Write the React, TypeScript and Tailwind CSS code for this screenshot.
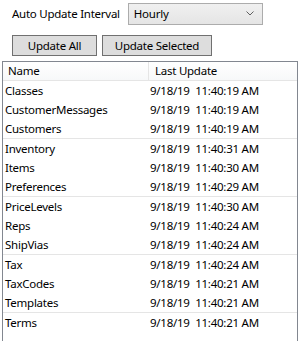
import React from 'react';

interface TableRow {
  name: string;
  updated: string;
}

const rows: TableRow[] = [
  { name: 'Classes', updated: '9/18/19  11:40:19 AM' },
  { name: 'CustomerMessages', updated: '9/18/19  11:40:19 AM' },
  { name: 'Customers', updated: '9/18/19  11:40:19 AM' },
  { name: 'Inventory', updated: '9/18/19  11:40:31 AM' },
  { name: 'Items', updated: '9/18/19  11:40:30 AM' },
  { name: 'Preferences', updated: '9/18/19  11:40:29 AM' },
  { name: 'PriceLevels', updated: '9/18/19  11:40:30 AM' },
  { name: 'Reps', updated: '9/18/19  11:40:24 AM' },
  { name: 'ShipVias', updated: '9/18/19  11:40:24 AM' },
  { name: 'Tax', updated: '9/18/19  11:40:24 AM' },
  { name: 'TaxCodes', updated: '9/18/19  11:40:21 AM' },
  { name: 'Templates', updated: '9/18/19  11:40:21 AM' },
  { name: 'Terms', updated: '9/18/19  11:40:21 AM' },
];

const App: React.FC = () => {
  return (
    <div
      className="w-[301px] h-[341px] overflow-hidden bg-white text-[11.5px] tracking-[-0.25px] text-black"
      style={{ fontFamily: '"Noto Sans", "Open Sans", sans-serif' }}
    >
      {/* interval picker */}
      <div className="flex items-center pt-[3px] pl-[12px] h-[24px]">
        <span className="mr-[8px] leading-none">Auto Update Interval</span>
        <div className="flex items-center justify-between w-[135px] h-[22px] border border-[#acacac] bg-gradient-to-b from-[#f0f0f0] to-[#e5e5e5] pl-[5px] pr-[8px]">
          <span className="leading-none">Hourly</span>
          <svg width="8" height="5" viewBox="0 0 8 5" className="text-[#606060]">
            <path d="M0.5 0.5 L4 4 L7.5 0.5" fill="none" stroke="currentColor" strokeWidth="1" />
          </svg>
        </div>
      </div>

      {/* buttons */}
      <div className="flex gap-[5px] pl-[12px] mt-[11px]">
        <button className="w-[85px] h-[21px] border border-[#707070] bg-[#dddddd] leading-none">Update All</button>
        <button className="w-[110px] h-[21px] border border-[#707070] bg-[#dddddd] leading-none">Update Selected</button>
      </div>

      {/* list */}
      <div className="ml-[2px] mt-[5px] w-[296px] h-[300px] border border-[#828790] border-b-0 bg-white">
        <div className="flex h-[19px] border-b border-[#e5e5e5] bg-gradient-to-b from-white to-[#f7f8f9]">
          <div className="w-[146px] pl-[5px] flex items-center border-r border-[#e5e5e5]">Name</div>
          <div className="pl-[6px] flex items-center">Last Update</div>
        </div>
        {rows.map((row, i) => (
          <div
            key={row.name}
            className={`flex items-center ${i % 3 === 2 ? 'h-[20px] border-b border-[#e5e5e5]' : 'h-[19px]'}`}
          >
            <div className="w-[146px] pl-[2px]">{row.name}</div>
            <div className="pl-[1px] whitespace-pre">{row.updated}</div>
          </div>
        ))}
      </div>
    </div>
  );
};

export default App;
